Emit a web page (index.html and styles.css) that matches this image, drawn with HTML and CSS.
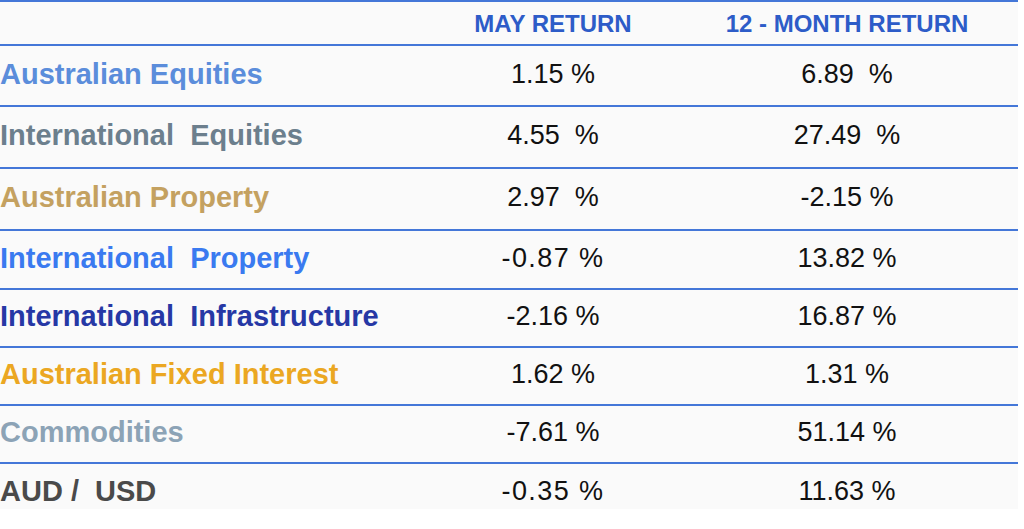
FILE: index.html
```html
<!DOCTYPE html>
<html lang="en">
<head>
<meta charset="utf-8">
<title>Returns</title>
<link rel="stylesheet" href="styles.css">
</head>
<body>
<div class="table">
  <div class="row head">
    <div class="cell label"></div>
    <div class="cell hdr">MAY RETURN</div>
    <div class="cell hdr">12 - MONTH RETURN</div>
  </div>
  <div class="row">
    <div class="cell label c1">Australian Equities</div>
    <div class="cell num">1.15 %</div>
    <div class="cell num">6.89  %</div>
  </div>
  <div class="row">
    <div class="cell label c2">International  Equities</div>
    <div class="cell num">4.55  %</div>
    <div class="cell num">27.49  %</div>
  </div>
  <div class="row">
    <div class="cell label c3">Australian Property</div>
    <div class="cell num">2.97  %</div>
    <div class="cell num">-2.15 %</div>
  </div>
  <div class="row">
    <div class="cell label c4">International  Property</div>
    <div class="cell num spaced">-0.87 %</div>
    <div class="cell num">13.82 %</div>
  </div>
  <div class="row">
    <div class="cell label c5">International  Infrastructure</div>
    <div class="cell num">-2.16 %</div>
    <div class="cell num">16.87 %</div>
  </div>
  <div class="row">
    <div class="cell label c6">Australian Fixed Interest</div>
    <div class="cell num">1.62 %</div>
    <div class="cell num">1.31 %</div>
  </div>
  <div class="row">
    <div class="cell label c7">Commodities</div>
    <div class="cell num">-7.61 %</div>
    <div class="cell num">51.14 %</div>
  </div>
  <div class="row last">
    <div class="cell label c8">AUD /  USD</div>
    <div class="cell num spaced">-0.35 %</div>
    <div class="cell num">11.63 %</div>
  </div>
</div>
</body>
</html>
```

FILE: styles.css
```css
html, body {
  margin: 0;
  padding: 0;
  background: #ffffff;
}

body {
  font-family: "Liberation Sans", Arial, sans-serif;
}

.table {
  width: 1018px;
  height: 503px;
  padding-top: 4px;
  background: #fafafa;
  border-top: 2px solid #4477d8;
  display: grid;
  grid-template-rows: 40px 61px 62px 62px 59px 58px 58px 58px 58px;
  overflow: hidden;
}

.row {
  display: grid;
  grid-template-columns: 430px 246px 342px;
  align-items: center;
  border-bottom: 2px solid #4477d8;
  box-sizing: border-box;
  padding-bottom: 3px;
}

.row.last {
  border-bottom: none;
}

.cell {
  white-space: pre;
}

.label {
  font-weight: bold;
  font-size: 29px;
}

.hdr {
  font-weight: bold;
  font-size: 24px;
  color: #2d5cc8;
  text-align: center;
}

.num {
  font-size: 27px;
  color: #111111;
  text-align: center;
}

.spaced {
  letter-spacing: 1.4px;
}

.c1 { color: #5b8ddb; }
.c2 { color: #6c7f8d; }
.c3 { color: #c4a160; }
.c4 { color: #3a7af0; }
.c5 { color: #2638a5; }
.c6 { color: #eba722; }
.c7 { color: #8ca3b6; }
.c8 { color: #4a4a4a; }
```
